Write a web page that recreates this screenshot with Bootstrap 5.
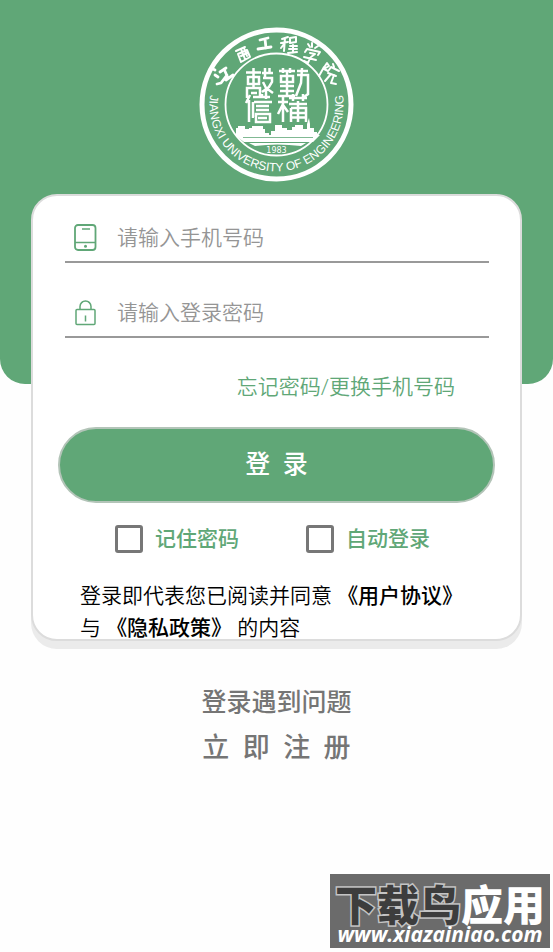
<!DOCTYPE html>
<html lang="zh-CN">
<head>
<meta charset="utf-8">
<meta name="viewport" content="width=device-width, initial-scale=1">
<title>登录</title>
<link href="https://cdn.jsdelivr.net/npm/bootstrap@5.3.0/dist/css/bootstrap.min.css" rel="stylesheet">
<style>
:root { --brand: #60a777; --muted: #757575; }
body { font-family: Roboto, "Noto Sans CJK SC", sans-serif; font-size: 21px; line-height: 32px; color: #000; background: #fefefe; }
a { text-decoration: none; }
.hero { background: var(--brand); border-radius: 0 0 25px 25px; padding: 27px 0 202px; }
.seal { width: 155px; height: 155px; }
.panel { margin: -190px 31px 0; background: #fff; border: 2px solid #dcdcdc; border-radius: 26px; box-shadow: 0 8px 0 #ebebeb; padding: 19px 25px 0; }
.field { margin: 0 6px 27px 7px; border-bottom: 2px solid #999; height: 48px; padding-left: 8px; gap: 18px; }
.field input { color: #444; font-size: 21px; line-height: 32px; min-width: 0; font-weight: 350; }
.field input::placeholder { color: #959595; opacity: 1; }
.field input:focus { outline: 0; }
.forgot { margin: 0 40px 24px 0; padding-top: 6px; color: var(--brand); font-weight: 350; }
.btn-login { --bs-btn-color: #fff; --bs-btn-bg: var(--brand); --bs-btn-border-color: #b3c4b8; --bs-btn-hover-color: #fff; --bs-btn-hover-bg: #529668; --bs-btn-hover-border-color: #b3c4b8; --bs-btn-border-width: 2px; height: 76px; font-size: 25px; font-weight: 500; white-space: pre; }
.options { gap: 67px; margin-top: 20px; padding-right: 8px; }
.options .form-check-input { width: 28px; height: 28px; border: 3px solid #777; border-radius: 3px; }
.options label { color: var(--brand); font-weight: 500; }
.terms { margin: 25px 0 -5px 22px; padding-right: 20px; line-height: 32px; font-weight: 350; }
.terms a { color: #000; font-weight: 500; }
.help a { color: var(--muted); font-weight: 500; }
.help { margin-top: 46px; }
.help .problem { font-size: 25px; line-height: 32px; }
.help .signup { font-size: 27px; line-height: 58px; white-space: pre; }
.stamp { background: #6b6b6b; width: 220px; height: 74px; margin: 0 3px 4px; padding-top: 8px; color: #fff; }
.stamp-name { font-family: "Noto Sans CJK SC", sans-serif; font-weight: 900; font-size: 42px; line-height: 41px; }
.stamp-name span { color: #3d3d3d; -webkit-text-stroke: 3px #c4c4c4; paint-order: stroke fill; }
.stamp-url { font: italic 700 21px/22px "Open Sans", sans-serif; }
</style>
<script src="https://cdn.jsdelivr.net/npm/bootstrap@5.3.0/dist/js/bootstrap.bundle.min.js"></script>
</head>
<body>
<div class="d-flex flex-column min-vh-100">
<header class="hero text-center">
<svg class="seal d-block mx-auto" viewBox="0 0 155 155" fill="none" stroke="#fff" role="img" aria-label="江西工程学院">
<circle cx="77.500" cy="77.500" r="74.500" stroke-width="5"/>
<circle cx="77.500" cy="77.500" r="51" stroke-width="1.800"/>
<defs><path id="lower" d="M14.500 54.600A67 67 0 1 0 140.500 54.600"/></defs>
<text fill="#fff" stroke="none" font-family="Liberation Sans, sans-serif" font-size="12"><textPath href="#lower" startOffset="50%" text-anchor="middle">JIANGXI UNIVERSITY OF ENGINEERING</textPath></text>
<!-- brush lettering -->
<g stroke-width="2" stroke-linecap="round" stroke-linejoin="round">
<path d="M14 42l2 1M16 48l3 2M18 57l4-1 6-8M21 45l6-4M25 42l4 9M27 53l7-5" stroke-width="2.800"/>
<path d="M37 24l9-4M39 27l9-4 3 7-9 5zM42 22l4 10M45 21l3 8M42 29l6-3"/>
<path d="M61 13l8-2M66 12l1 9M59 22l13-2" stroke-width="2.800"/>
<path d="M83 12l6-2M82 16l7-1M86 11l-1 13M85 17l-3 4M91 11l6-1v5l-6 1zM91 19h7M90 22h8M94 18v8M89 26l9-1"/>
<path d="M109 17l2 3M113 16v4M119 19l-3 2M106 25l2-3 13 3-2 3M111 26l5 1-4 3M105 30l12 3M111 31l-2 5-4-2"/>
<path d="M124 42l4-6 2 3-5 3 4 2M125 40l-5 9M134 37l1 3M130 43l2-3 8 4M129 46l8 3M132 47l-6 7M135 48l-3 8 5 1"/>
</g>
<!-- seal-script motto -->
<g stroke-width="2.500">
<path d="M47 45.500h15M54.500 41v8M49 50h11v7H49zM54.500 50v12M48 71V61h13v10M52 66h6M66 41v9M63 46h11M70.500 41v5M64 51h9v4l-3 5-7 5M64 55l3 6 7 5M67 61v11"/>
<path d="M80 44h16M84 41v5M91 41v5M82 49h12v6H82zM88 44v25M81 59h14M81 64h14M79 69h17M98 48h11v19l-4 3M103 41l-1 15-5 13M98 44h11"/>
<path d="M51 68l-4 8M50 73v22M54 70h17M55 75h18M57 79h13M57 83h13M57 87h14v8H57zM54 75v16M59 91h9M63 67v4"/>
<path d="M84 68v27M79 75h10M84 77l-5 10M84 78l5 7M90 71h18M94 67v7M104 67v7M90 77h18M92 81h15v14M92 81v14M92 86h15M92 90.500h15M99 74v21"/>
</g>
<path fill="#fff" stroke="none" d="M37 109v-8h2v-2h7v3h4v-1h3v-2h11v3h2v4h4v2h2v-4h4v-6h7v3h5v2h5v-3h3v-2h8v4h4v-5l2-6 1 6v4h4v4h3v3h3l-7 7H45z"/>
<path fill="#fff" stroke="none" d="M44 111h69l-3 3H47zM50 116h57l-5 3q-24-3-46 0z"/>
<path d="M44 110.500h70" stroke="#60a777" stroke-width=".8"/>
<text x="77.500" y="126" fill="#fff" stroke="none" font-family="DejaVu Sans, sans-serif" font-size="8" text-anchor="middle">1983</text>
</svg>
</header>
<main>
<form class="panel">
<div class="field d-flex align-items-center">
<label for="phone" class="d-flex"><svg width="26" height="28" viewBox="0 0 26 28" fill="none" stroke="#60a777" stroke-width="1.800" aria-label="手机"><rect x="2" y="1" width="20.500" height="25" rx="3"/><path d="M2 18.500h21M9 5h8" stroke-width="1.500"/><circle cx="12.500" cy="22.300" r="1.500" fill="#60a777" stroke="none"/></svg></label>
<input id="phone" type="tel" class="border-0 bg-transparent p-0 flex-grow-1" placeholder="请输入手机号码">
</div>
<div class="field d-flex align-items-center">
<label for="password" class="d-flex"><svg width="26" height="28" viewBox="0 0 26 28" fill="none" stroke="#60a777" stroke-width="1.500" aria-label="密码"><rect x="3" y="10.500" width="19" height="15" rx="1"/><path d="M7 10.500V7.500a5.500 5.500 0 0 1 11 0v3M12.500 16.500v6"/></svg></label>
<input id="password" type="password" class="border-0 bg-transparent p-0 flex-grow-1" placeholder="请输入登录密码">
</div>
<div class="forgot text-end"><a href="#" class="text-reset">忘记密码/更换手机号码</a></div>
<button type="submit" class="btn btn-login rounded-pill w-100">登  录</button>
<div class="options d-flex justify-content-center">
<div class="d-flex align-items-center gap-2"><input class="form-check-input m-0 me-1" type="checkbox" id="remember"><label for="remember">记住密码</label></div>
<div class="d-flex align-items-center gap-2"><input class="form-check-input m-0 me-1" type="checkbox" id="auto"><label for="auto">自动登录</label></div>
</div>
<p class="terms">登录即代表您已阅读并同意 <a href="#">《用户协议》</a> 与 <a href="#">《隐私政策》</a> 的内容</p>
</form>
<nav class="help d-flex flex-column align-items-center">
<a href="#" class="problem">登录遇到问题</a>
<a href="#" class="signup">立  即  注  册</a>
</nav>
</main>
<footer class="stamp mt-auto ms-auto text-center">
<div class="stamp-name"><span>下载鸟</span>应用</div>
<div class="stamp-url">www.xiazainiao.com</div>
</footer>
</div>
</body>
</html>
